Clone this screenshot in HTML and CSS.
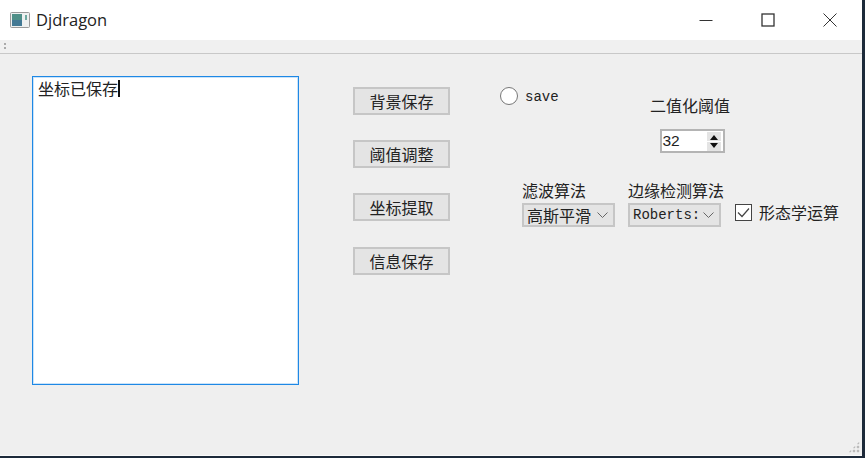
FILE: index.html
```html
<!DOCTYPE html>
<html lang="zh">
<head>
<meta charset="utf-8">
<title>Djdragon</title>
<link rel="stylesheet" href="styles.css">
</head>
<body>
<div class="window">
  <header class="titlebar">
    <svg class="app-icon" width="22" height="18" viewBox="0 0 22 18">
      <rect x="1.5" y="1.5" width="19" height="15" rx="1" fill="#eef0f0" stroke="#9a9a9a"/>
      <rect x="3" y="3" width="10" height="12" fill="#4f8f88"/>
      <rect x="3" y="9" width="10" height="6" fill="#3f6f9a" opacity=".7"/>
      <rect x="16" y="4" width="2" height="5" fill="#6fa8a0"/>
    </svg>
    <span class="title">Djdragon</span>
    <div class="controls">
      <svg width="14" height="14" viewBox="0 0 14 14"><path d="M0.5 7.5H13.5" stroke="#333" fill="none"/></svg>
      <svg width="14" height="14" viewBox="0 0 14 14"><rect x="1" y="1" width="12" height="12" stroke="#333" stroke-width="1.3" fill="none"/></svg>
      <svg width="14" height="14" viewBox="0 0 14 14"><path d="M0.5 0.5L13.5 13.5M13.5 0.5L0.5 13.5" stroke="#333" fill="none"/></svg>
    </div>
  </header>
  <div class="toolbar"><span class="grip"></span></div>
  <main class="content">
    <div class="log"><span class="log-text">坐标已保存</span><span class="caret"></span></div>
    <div class="buttons">
      <div class="btn">背景保存</div>
      <div class="btn">阈值调整</div>
      <div class="btn">坐标提取</div>
      <div class="btn btn-last">信息保存</div>
    </div>
    <div class="panel">
      <div class="panel-top">
        <label class="radio-row"><span class="radio"></span><span class="mono">save</span></label>
        <div class="threshold">
          <div class="cap">二值化阈值</div>
          <div class="spin">
            <span class="spin-value">32</span>
            <span class="spin-arrows">
              <svg width="16" height="19" viewBox="0 0 16 19">
                <rect x="1" y="0" width="14" height="19" fill="#e4e4e4"/>
                <path d="M8 3L12 8H4Z M8 16L12 11H4Z" fill="#111"/>
                <path d="M1 9.5H15" stroke="#fff"/>
              </svg>
            </span>
          </div>
        </div>
      </div>
      <div class="panel-bottom">
        <div class="field field-filter">
          <div class="cap">滤波算法</div>
          <div class="combo combo-filter"><span class="combo-text">高斯平滑</span>
            <svg class="chev" width="11" height="6" viewBox="0 0 11 6"><path d="M0.5 0.5L5.5 5.5L10.5 0.5" stroke="#666" fill="none"/></svg>
          </div>
        </div>
        <div class="field field-edge">
          <div class="cap">边缘检测算法</div>
          <div class="combo combo-edge"><span class="combo-text mono-edge">Roberts:</span>
            <svg class="chev" width="11" height="6" viewBox="0 0 11 6"><path d="M0.5 0.5L5.5 5.5L10.5 0.5" stroke="#666" fill="none"/></svg>
          </div>
        </div>
        <label class="check-row">
          <svg class="check" width="17" height="17" viewBox="0 0 17 17">
            <rect x=".5" y=".5" width="16" height="16" fill="#fff" stroke="#444"/>
            <path d="M3 8.5L7 12.5L14 4.5" stroke="#444" stroke-width="1.2" fill="none"/>
          </svg>
          <span>形态学运算</span>
        </label>
      </div>
    </div>
  </main>
  <div class="grip-corner"></div>
</div>
</body>
</html>
```
FILE: styles.css
```css
* { box-sizing: border-box; }
html, body { margin: 0; height: 100%; }
body {
  width: 865px; height: 458px; overflow: hidden;
  background: #1d2a3a;
  font-family: "Noto Sans CJK SC", "Liberation Sans", sans-serif;
  font-size: 16px; line-height: 20px; color: #222;
}
.window {
  position: relative;
  width: 862px; height: 456px;
  display: flex; flex-direction: column;
  background: #efefef;
  border-bottom: 1px solid #fafafa;
}
.titlebar {
  height: 40px; background: #fff;
  display: flex; align-items: center;
  padding-left: 9px;
}
.app-icon { margin-right: 5px; }
.title { font-family: "Open Sans", sans-serif; font-size: 16.5px; color: #222; }
.controls { margin-left: auto; display: flex; align-items: center; gap: 48px; padding-right: 25px; }
.toolbar {
  height: 14px; background: #f0f0f0;
  border-bottom: 1px solid #c8c8c8;
  display: flex; align-items: center; padding-left: 4px;
}
.grip { width: 2px; height: 7px; background: repeating-linear-gradient(#aaa 0 2px, transparent 2px 4px); }
.content { flex: 1; display: flex; align-items: flex-start; padding: 22px 0 0 32px; }
.log {
  width: 267px; height: 309px; background: #fff;
  border: 1px solid #1e88e5;
  box-shadow: inset 0 0 0 1px rgba(42, 143, 230, .25);
  padding: 1px 0 0 5px;
  display: flex; align-items: flex-start;
}
.log-text { font-size: 16px; }
.caret { width: 2px; height: 17px; background: #111; margin-top: 2px; }
.buttons { display: flex; flex-direction: column; gap: 25px; margin: 11px 0 0 54px; }
.btn {
  width: 97px; height: 28px;
  background: #e4e4e4; border: 2px solid #c6c6c6;
  display: flex; align-items: center; justify-content: center;
}
.btn-last { margin-top: 1px; }
.panel { width: 340px; margin-left: 50px; }
.panel-top { display: flex; align-items: flex-start; height: 104px; }
.radio-row { display: flex; align-items: center; gap: 7px; margin-top: 11px; height: 18px; width: 151px; }
.radio { width: 18px; height: 18px; border-radius: 50%; background: #fff; border: 1.5px solid #777; }
.mono { font-family: "Liberation Mono", monospace; font-size: 14px; position: relative; top: 1px; }
.threshold { margin-top: 19px; display: flex; flex-direction: column; align-items: center; width: 78px; }
.cap { white-space: nowrap; }
.spin {
  margin: 14px 0 0 4px; width: 65px; height: 24px; flex: none;
  background: #fff; border: 2px solid #b4b4b4;
  display: flex; align-items: center; justify-content: space-between;
  padding: 0 1px 0 1px;
}
.spin-value { font-family: "Liberation Sans", sans-serif; font-size: 15.5px; }
.spin-arrows { display: flex; }
.panel-bottom { display: flex; align-items: flex-start; }
.field-filter { margin-left: 22px; width: 106px; }
.field-edge { width: 107px; }
.combo {
  height: 24px; margin-top: 3px;
  background: #e4e4e4; border: 2px solid #c6c6c6;
  display: flex; align-items: center; justify-content: space-between;
  padding: 0 5px 0 3px;
}
.combo-filter { width: 93px; }
.combo-edge { width: 93px; }
.mono-edge { white-space: nowrap; font-family: "Liberation Mono", monospace; font-size: 14px; }
.check-row { display: flex; align-items: center; gap: 7px; margin-top: 22px; white-space: nowrap; }
.grip-corner {
  position: absolute; right: 2px; bottom: 2px; width: 12px; height: 12px;
  background:
    radial-gradient(circle at center, #bbb 1.5px, transparent 1.6px) 0 0 / 4px 4px;
  clip-path: polygon(100% 0, 100% 100%, 0 100%);
}
```
